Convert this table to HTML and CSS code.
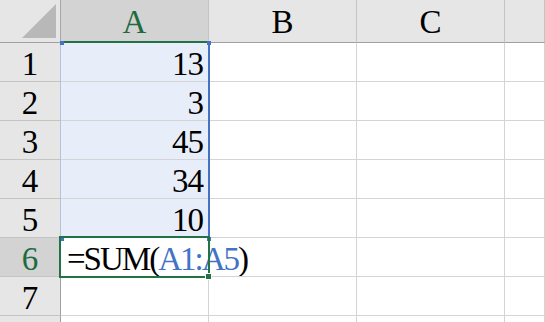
FILE: index.html
```html
<!DOCTYPE html>
<html lang="zh">
<head>
    <meta charset="UTF-8">
    <title>Sheet1</title>
    <link rel="stylesheet" href="styles.css">
</head>
<body>
    <div class="sheet">
        <div class="grid">
            <div class="corner"><span class="corner-mark"></span></div>
            <div class="col-head active">A</div>
            <div class="col-head">B</div>
            <div class="col-head">C</div>
            <div class="col-head"></div>

            <div class="row-head">1</div>
            <div class="cell num ref">13</div>
            <div class="cell"></div>
            <div class="cell"></div>
            <div class="cell"></div>

            <div class="row-head">2</div>
            <div class="cell num ref">3</div>
            <div class="cell"></div>
            <div class="cell"></div>
            <div class="cell"></div>

            <div class="row-head">3</div>
            <div class="cell num ref">45</div>
            <div class="cell"></div>
            <div class="cell"></div>
            <div class="cell"></div>

            <div class="row-head">4</div>
            <div class="cell num ref">34</div>
            <div class="cell"></div>
            <div class="cell"></div>
            <div class="cell"></div>

            <div class="row-head">5</div>
            <div class="cell num ref">10</div>
            <div class="cell"></div>
            <div class="cell"></div>
            <div class="cell"></div>

            <div class="row-head active">6</div>
            <div class="cell formula">=SUM(<span class="range">A1:A5</span>)</div>
            <div class="cell"></div>
            <div class="cell"></div>
            <div class="cell"></div>

            <div class="row-head">7</div>
            <div class="cell"></div>
            <div class="cell"></div>
            <div class="cell"></div>
            <div class="cell"></div>

            <div class="row-head"></div>
            <div class="cell"></div>
            <div class="cell"></div>
            <div class="cell"></div>
            <div class="cell"></div>
        </div>

        <!-- range picked by the formula, A1:A5 -->
        <div class="ref-box">
            <span class="dot dot-tl"></span>
            <span class="dot dot-tr"></span>
            <span class="dot dot-bl"></span>
            <span class="dot dot-br"></span>
        </div>

        <!-- active cell A6 -->
        <div class="active-cell"><span class="fill-handle"></span></div>
    </div>
</body>
</html>
```

FILE: styles.css
```css
body {
    margin: 0;
    background: #fff;
    font-family: "Liberation Serif", "Times New Roman", serif;
    overflow: hidden;
}
.sheet {
    position: relative;
    width: 545px;
    height: 322px;
    overflow: hidden;
}
.grid {
    display: grid;
    grid-template-columns: 61px 148px 148px 148px 1fr;
    grid-template-rows: 43px repeat(8, 39px);
}
.grid > div {
    box-sizing: border-box;
    border-right: 1px solid #d4d4d4;
    border-bottom: 1px solid #d4d4d4;
    font-size: 33px;
    line-height: 1;
    color: #000;
}
.corner {
    position: relative;
    background: #e6e6e6;
    border-right-color: #a8a8a8 !important;
    border-bottom-color: #a0a0a0 !important;
}
.corner-mark {
    position: absolute;
    right: 4px;
    bottom: 4px;
    width: 0;
    height: 0;
    border-left: 34px solid transparent;
    border-bottom: 34px solid #b8b8b8;
}
.col-head {
    background: #e6e6e6;
    border-right-color: #c4c4c4 !important;
    border-bottom-color: #a0a0a0 !important;
    display: flex;
    align-items: center;
    justify-content: center;
    padding-top: 3px;
}
.col-head.active {
    background: #d3d3d3;
    color: #1e6b40 !important;
    border-bottom: 2px solid #217346 !important;
}
.row-head {
    background: #e6e6e6;
    border-right-color: #a0a0a0 !important;
    border-bottom-color: #c4c4c4 !important;
    display: flex;
    align-items: center;
    justify-content: center;
    padding-top: 4px;
}
.row-head.active {
    background: #d3d3d3;
    color: #1e6b40 !important;
}
.cell {
    display: flex;
    align-items: center;
    padding: 4px 5px 0 6px;
}
.cell.num {
    justify-content: flex-end;
    letter-spacing: -1px;
}
.cell.ref {
    background: #e8eef9;
}
.formula {
    white-space: nowrap;
    overflow: visible;
    letter-spacing: -2px;
}
.range {
    color: #4472c4;
}
.ref-box {
    position: absolute;
    left: 60px;
    top: 42px;
    width: 150px;
    height: 196px;
    box-sizing: border-box;
    border-right: 2px solid #4472c4;
    border-left: 1px solid #b4c2dc;
}
.dot {
    position: absolute;
    width: 4px;
    height: 4px;
    background: #4472c4;
}
.dot-tl { left: -1px; top: -1px; }
.dot-tr { right: -3px; top: -1px; }
.dot-bl { left: -1px; bottom: -3px; }
.dot-br { right: -3px; bottom: -3px; }
.active-cell {
    position: absolute;
    left: 59px;
    top: 236px;
    width: 151px;
    height: 42px;
    box-sizing: border-box;
    border: 2px solid #217346;
}
.fill-handle {
    position: absolute;
    right: -4px;
    bottom: -4px;
    width: 5px;
    height: 5px;
    background: #217346;
    border: 1px solid #fff;
}
```
